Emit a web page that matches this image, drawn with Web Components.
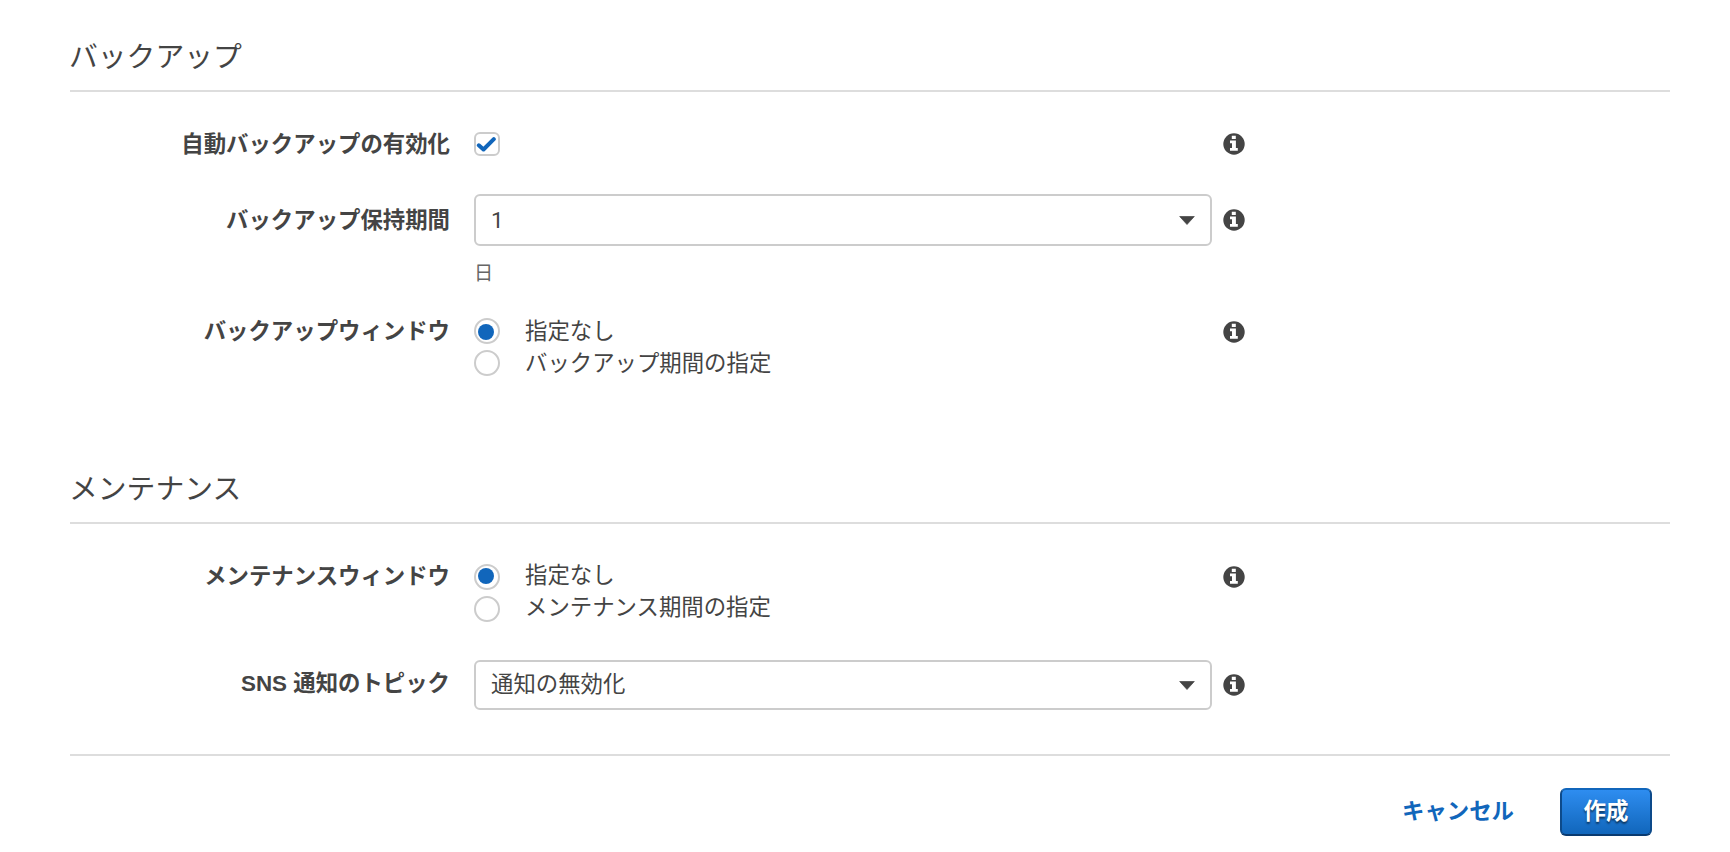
<!DOCTYPE html>
<html lang="ja">
<head>
<meta charset="utf-8">
<title>バックアップとメンテナンス</title>
<style>
body{margin:0;background:#fff;color:#444;font:22.4px/32px "Liberation Sans","Noto Sans CJK JP",sans-serif}
</style>
</head>
<body>
<settings-page>
  <form-section heading="バックアップ">
    <form-row label="自動バックアップの有効化" style="margin-top:40px;height:62px;--label-top:0px;--icon-top:1px"><check-box></check-box></form-row>
    <form-row label="バックアップ保持期間" style="height:124px;--label-top:14px;--icon-top:15px"><select-box style="height:52px">1</select-box><hint-text>日</hint-text></form-row>
    <form-row label="バックアップウィンドウ" style="height:62px;--label-top:1px;--icon-top:3px">
      <radio-item checked>指定なし</radio-item><radio-item>バックアップ期間の指定</radio-item>
    </form-row>
  </form-section>
  <form-section heading="メンテナンス" style="margin-top:80px">
    <form-row label="メンテナンスウィンドウ" style="margin-top:40px;height:96px;--label-top:0px;--icon-top:2px">
      <radio-item checked style="--text-shift:-1px;--dot-shift:-1px">指定なし</radio-item><radio-item style="--text-shift:-1px">メンテナンス期間の指定</radio-item>
    </form-row>
    <form-row label="SNS 通知のトピック" style="height:94px;--label-top:11px;--icon-top:14px"><select-box style="height:50px;--text-shift:-1px">通知の無効化</select-box></form-row>
  </form-section>
  <form-actions><cancel-link>キャンセル</cancel-link><primary-button>作成</primary-button></form-actions>
</settings-page>
<script>
const define = (name, css, html) => customElements.define(name, class extends HTMLElement {
  constructor() {
    super();
    const root = this.attachShadow({mode: 'open'});
    root.innerHTML = `<style>:host{display:block;box-sizing:border-box}${css}</style>${html}`;
  }
  connectedCallback() {
    for (const el of this.shadowRoot.querySelectorAll('[data-attr]'))
      el.textContent = this.getAttribute(el.dataset.attr);
  }
});

define('settings-page', `:host{padding:28px 60px 0 70px;height:852px;overflow:hidden}`, `<slot></slot>`);

define('form-section', `
  h2{margin:0;height:62px;line-height:58px;font-size:28.8px;font-weight:400;text-indent:-1px;border-bottom:2px solid #ddd}
`, `<h2 data-attr="heading"></h2><slot></slot>`);

define('form-row', `
  :host{display:grid;grid-template-columns:380px 738px 22px;column-gap:0;align-items:start}
  :host{grid-template-columns:380px 762px 33px}
  label{font-weight:700;text-align:right;line-height:26px;white-space:nowrap;padding-top:var(--label-top,0)}
  .control{margin-left:24px;width:738px}
  info-icon{margin:var(--icon-top,0) 0 0 11px}
`, `<label data-attr="label"></label><div class="control"><slot></slot></div><info-icon></info-icon>`);

define('info-icon', `:host{width:22px;height:22px}svg{display:block}`,
 `<svg width="22" height="22" viewBox="0 0 22 22"><circle cx="11" cy="11" r="10.7" fill="#444"/><path fill="#fff" d="M8.8 2.8h4v3.2h-4zM7 7.5h5.9v7.4h1.9v2.8H7v-2.8h2v-4.6H7z"/></svg>`);

define('check-box', `:host{width:26px;height:24px;border:2px solid #ccc;border-radius:6px;background:#fff}svg{display:block}`,
 `<svg width="22" height="20" viewBox="0 0 22 20"><path d="M2.8 11.3l4.7 4.2L17.8 5.2" fill="none" stroke="#1166bb" stroke-width="4" stroke-linecap="round" stroke-linejoin="round"/></svg>`);

define('select-box', `
  :host{display:flex;align-items:center;justify-content:space-between;width:738px;border:2px solid #ccc;border-radius:6px;padding:0 15px;background:#fff;font-family:Roboto,"Noto Sans CJK JP",sans-serif}
  span{transform:translateY(var(--text-shift,0))}
`, `<span><slot></slot></span><svg width="16" height="9" viewBox="0 0 16 9"><path d="M.7.5h14.6L8 8.5z" fill="#444" stroke="#444" stroke-width=".7" stroke-linejoin="round"/></svg>`);

define('hint-text', `:host{font-size:19.2px;line-height:28px;color:#666;margin-top:14px}`, `<slot></slot>`);

define('radio-item', `
  :host{display:flex;height:32px;align-items:flex-start}
  i{box-sizing:border-box;width:26px;height:26px;border:2px solid #ccc;border-radius:50%}
  svg{display:none}
  :host([checked]) svg{display:block;transform:translateY(var(--dot-shift,1px))}
  span{margin-left:25px;line-height:26px;transform:translateY(var(--text-shift,1px))}
`, `<i><svg width="22" height="22"><circle cx="10" cy="11" r="8" fill="#1166bb"/></svg></i><span><slot></slot></span>`);

define('form-actions', `
  :host{display:flex;justify-content:flex-end;align-items:center;border-top:2px solid #ddd;padding:32px 18px 0 0}
`, `<slot></slot>`);

define('cancel-link', `:host{color:#1166bb;font-weight:700;margin-right:46px}`, `<slot></slot>`);

define('primary-button', `
  :host{width:92px;height:48px;border:2px solid;border-color:#1166bb #0d4a8a #093a70;border-radius:6px;background:linear-gradient(#2e8df0,#1166bb);color:#fff;font-weight:700;text-align:center;line-height:44px;text-shadow:0 2px 2px rgba(0,0,0,.55)}
`, `<slot></slot>`);
</script>
</body>
</html>
